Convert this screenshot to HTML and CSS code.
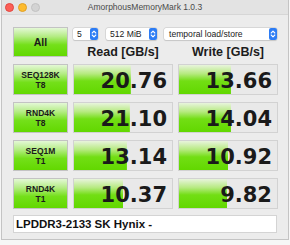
FILE: index.html
```html
<!DOCTYPE html>
<html>
<head>
    <link rel="stylesheet" href="styles.css">
</head>
<body>
    <div class="window">
        <div class="titlebar">
            <div class="lights">
                <span class="light red"></span>
                <span class="light yellow"></span>
                <span class="light gray"></span>
            </div>
            <div class="title">AmorphousMemoryMark 1.0.3</div>
            <div></div>
        </div>

        <div class="content">
            <div class="top">
                <div class="btn btn-all">All</div>
                <div class="top-right">
                    <div class="selects">
                        <div class="select select-count">
                            <span>5</span>
                            <svg class="stepper" viewBox="0 0 8 12"><rect width="8" height="12" rx="2" fill="#2d7cf4"/><path d="M2.2 5 L4 3.2 L5.8 5 M2.2 7 L4 8.8 L5.8 7" fill="none" stroke="#fff" stroke-width="1.1" stroke-linecap="round" stroke-linejoin="round"/></svg>
                        </div>
                        <div class="select select-size">
                            <span>512 MiB</span>
                            <svg class="stepper" viewBox="0 0 8 12"><rect width="8" height="12" rx="2" fill="#2d7cf4"/><path d="M2.2 5 L4 3.2 L5.8 5 M2.2 7 L4 8.8 L5.8 7" fill="none" stroke="#fff" stroke-width="1.1" stroke-linecap="round" stroke-linejoin="round"/></svg>
                        </div>
                        <div class="select select-mode">
                            <span>temporal load/store</span>
                            <svg class="stepper" viewBox="0 0 8 12"><rect width="8" height="12" rx="2" fill="#2d7cf4"/><path d="M2.2 5 L4 3.2 L5.8 5 M2.2 7 L4 8.8 L5.8 7" fill="none" stroke="#fff" stroke-width="1.1" stroke-linecap="round" stroke-linejoin="round"/></svg>
                        </div>
                    </div>
                    <div class="heads">
                        <div>Read [GB/s]</div>
                        <div>Write [GB/s]</div>
                    </div>
                </div>
            </div>

            <div class="rows">
                <div class="row">
                    <div class="btn btn-test">SEQ128K<br>T8</div>
                    <div class="result" style="--fill: 58%">20.76</div>
                    <div class="result" style="--fill: 53%">13.66</div>
                </div>
                <div class="row">
                    <div class="btn btn-test">RND4K<br>T8</div>
                    <div class="result" style="--fill: 57%">21.10</div>
                    <div class="result" style="--fill: 53%">14.04</div>
                </div>
                <div class="row">
                    <div class="btn btn-test">SEQ1M<br>T1</div>
                    <div class="result" style="--fill: 54%">13.14</div>
                    <div class="result" style="--fill: 50%">10.92</div>
                </div>
                <div class="row">
                    <div class="btn btn-test">RND4K<br>T1</div>
                    <div class="result" style="--fill: 50%">10.37</div>
                    <div class="result" style="--fill: 49%">9.82</div>
                </div>
            </div>

            <div class="comment">LPDDR3-2133 SK Hynix -</div>
        </div>
    </div>
</body>
</html>
```

FILE: styles.css
```css
body {
    margin: 0;
    padding: 0;
    background-color: #f6f6f6;
    font-family: "Liberation Sans", Arial, sans-serif;
    color: #1c1c1c;
}

.window {
    margin-left: 1px;
    width: 286px;
    height: 239px;
    background-color: #ececec;
    border: 1px solid #c4c4c4;
    border-top: none;
}

.titlebar {
    height: 14px;
    display: grid;
    grid-template-columns: 1fr auto 1fr;
    align-items: center;
    background-color: #e3e3e3;
    border-bottom: 1px solid #d6d6d6;
}

.lights {
    display: flex;
    gap: 4px;
    padding-left: 3px;
}

.light {
    width: 9px;
    height: 9px;
    border-radius: 50%;
    box-sizing: border-box;
}

.light.red {
    background-color: #fc5f57;
    border: 1px solid #e2463f;
}

.light.yellow {
    background-color: #fdbb2e;
    border: 1px solid #e0a027;
}

.light.gray {
    background-color: #d3d3d3;
    border: 1px solid #c2c2c2;
}

.title {
    font-size: 8.5px;
    color: #4a4a4a;
}

.content {
    padding: 12px 0 0 11px;
}

.top {
    display: flex;
}

.btn {
    box-sizing: border-box;
    border: 1px solid #c3c3c3;
    background: linear-gradient(to bottom, #e4f8d6 0%, #b4ec84 30%, #74e01a 60%, #62d800 100%);
    display: flex;
    align-items: center;
    justify-content: center;
    text-align: center;
    font-weight: bold;
    color: #1a1a1a;
}

.btn-all {
    width: 55px;
    height: 30px;
    font-size: 10.5px;
}

.top-right {
    margin-left: 5px;
    width: 205px;
}

.selects {
    display: flex;
    margin-top: 1px;
    height: 12px;
}

.select {
    box-sizing: border-box;
    height: 12px;
    display: flex;
    align-items: center;
    justify-content: space-between;
    background-color: #fff;
    border-radius: 2px;
    box-shadow: 0 0 0 0.5px #c6c6c6, 0 0.5px 1px rgba(0, 0, 0, 0.15);
    font-size: 8.6px;
    color: #222;
    padding-left: 4px;
}

.select-count {
    width: 25px;
}

.select-size {
    width: 51px;
    margin-left: 8px;
}

.select-mode {
    width: 113px;
    margin-left: 7px;
    padding-left: 5px;
}

.stepper {
    width: 8px;
    height: 12px;
    display: block;
}

.heads {
    display: grid;
    grid-template-columns: 100px 100px;
    gap: 5px;
    margin-top: 5px;
    height: 15px;
    line-height: 15px;
    text-align: center;
    font-weight: bold;
    font-size: 12.5px;
}

.rows {
    margin-top: 4px;
    display: flex;
    flex-direction: column;
    gap: 7px;
}

.row {
    display: grid;
    grid-template-columns: 55px 100px 100px;
    gap: 5px;
    height: 31px;
}

.btn-test {
    font-size: 8.5px;
    line-height: 10px;
}

.result {
    box-sizing: border-box;
    border: 1px solid #d2d2d2;
    background: linear-gradient(to bottom, #e8f4dc 0%, #b6ea80 30%, #72de14 55%, #62d800 100%) no-repeat, #e9e9e9;
    background-size: var(--fill) 100%, auto;
    display: flex;
    align-items: center;
    justify-content: flex-end;
    padding: 2px 5px 0 0;
    font-family: "DejaVu Sans", Verdana, sans-serif;
    font-weight: bold;
    font-size: 21px;
    color: #1a1a1a;
}

.comment {
    box-sizing: border-box;
    margin-top: 6px;
    width: 264px;
    height: 18px;
    background-color: #fff;
    border: 1px solid #d4d4d4;
    padding-left: 2px;
    line-height: 16px;
    font-weight: bold;
    font-size: 11.5px;
    color: #111;
}
```
